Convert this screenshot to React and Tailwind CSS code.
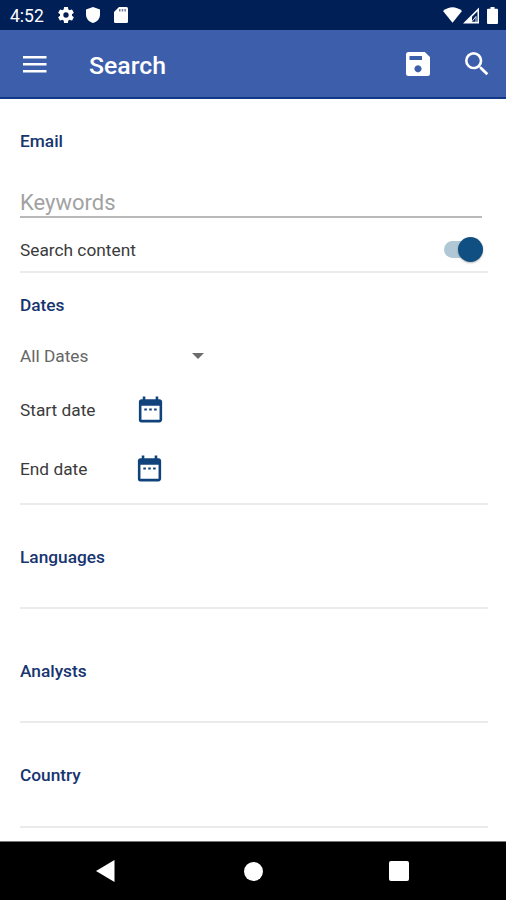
const Heading = ({ children, className }) => (
  <h2 className={`flex shrink-0 items-center text-[17.3px] font-medium text-[#17356f] ${className}`}>{children}</h2>
);

const Divider = ({ className = "" }) => <div className={`h-[2px] w-[468px] shrink-0 bg-[#ebebed] ${className}`} />;

const Calendar = ({ className = "" }) => (
  <svg viewBox="0 0 24 24" className={`mb-[2px] size-[31px] fill-[#10437c] ${className}`}>
    <path d="M19 4h-1V2h-2v2H8V2H6v2H5c-1.11 0-1.99.9-1.99 2L3 20a2 2 0 0 0 2 2h14c1.1 0 2-.9 2-2V6c0-1.1-.9-2-2-2zm0 16H5V9h14v11zM7.2 11.2h2v1.6h-2zM11 11.2h2v1.6h-2zM14.8 11.2h2v1.6h-2z" />
  </svg>
);

function StatusBar() {
  return (
    <div className="flex h-[30px] shrink-0 items-center bg-[#001f56] pl-[10px] text-white">
      <span className="w-[46px] pt-[3px] text-[17.5px] leading-none">4:52</span>
      <svg viewBox="0 0 24 24" className="size-[20px] fill-white">
        <path d="M19.14 12.94c.04-.3.06-.61.06-.94s-.02-.64-.07-.94l2.03-1.58a.49.49 0 0 0 .12-.61l-1.92-3.32a.49.49 0 0 0-.59-.22l-2.39.96c-.5-.38-1.03-.7-1.62-.94l-.36-2.54a.48.48 0 0 0-.48-.41h-3.84c-.24 0-.43.17-.47.41l-.36 2.54c-.59.24-1.13.57-1.62.94l-2.39-.96a.48.48 0 0 0-.59.22L2.74 8.87a.48.48 0 0 0 .12.61l2.03 1.58c-.05.3-.09.63-.09.94s.02.64.07.94l-2.03 1.58a.49.49 0 0 0-.12.61l1.92 3.32c.12.22.37.29.59.22l2.39-.96c.5.38 1.03.7 1.62.94l.36 2.54c.05.24.24.41.48.41h3.84c.24 0 .44-.17.47-.41l.36-2.54c.59-.24 1.13-.56 1.62-.94l2.39.96c.22.08.47 0 .59-.22l1.92-3.32a.48.48 0 0 0-.12-.61zM12 15.2A3.2 3.2 0 1 1 12 8.8a3.2 3.2 0 0 1 0 6.4z" />
      </svg>
      <svg viewBox="0 0 14 16" className="ml-[10px] h-[16px] w-[14px] fill-white">
        <path d="M7 0 14 2.6V7.5C14 11.5 11 15 7 16 3 15 0 11.5 0 7.5V2.6z" />
      </svg>
      <svg viewBox="0 0 14 16" className="ml-[14px] h-[16px] w-[14px]">
        <path className="fill-white" d="M5 0H12.5Q14 0 14 1.5V14.5Q14 16 12.5 16H1.5Q0 16 0 14.5V5z" />
        <path className="fill-[#6d7d9c]" d="M5 2h1.5v2.5H5zM7.7 2h1.5v2.5H7.7zM10.4 2h1.5v2.5h-1.5z" />
      </svg>
      <svg viewBox="0 0 19 16" className="ml-[315px] h-[16px] w-[19px] fill-white">
        <path d="M0 4Q9.5-3.5 19 4L9.5 15.7z" />
      </svg>
      <svg viewBox="0 0 17 17" className="ml-px h-[17px] w-[17px]">
        <path className="fill-white" fillRule="evenodd" d="M16 .5V16.5H0zM14.5 4.3 9 9.8V14.8h5.5z" />
        <path className="fill-none stroke-white stroke-[0.9]" d="M9 14.5 13 9.5V15" />
      </svg>
      <svg viewBox="0 0 11 17" className="ml-[7px] h-[17px] w-[11px] fill-white">
        <path d="M3.5 0h4v1.7H10Q11 1.7 11 2.7V16Q11 17 10 17H1Q0 17 0 16V2.7Q0 1.7 1 1.7h2.5z" />
      </svg>
    </div>
  );
}

function Toolbar() {
  return (
    <header className="flex h-[69px] shrink-0 items-center border-b-2 border-[#133787] bg-[#3c5eab] pl-[23px] text-white">
      <svg viewBox="0 0 24 18" className="h-[18px] w-[24px] fill-white">
        <path d="M0 .9h23.5v2.6H0zM0 7.9h23.5v2.6H0zM0 14.9h23.5v2.6H0z" />
      </svg>
      <h1 className="ml-[42px] mt-[6px] w-[317px] text-[24.8px] font-medium leading-none">Search</h1>
      <svg viewBox="0 0 24 24" className="size-[24px]">
        <path className="fill-white" fillRule="evenodd" d="M2.5 0H18.8L24 5V21.5Q24 24 21.5 24H2.5Q0 24 0 21.5V2.5Q0 0 2.5 0zM3.5 4V8H16V4zM12 13.2a3.6 3.6 0 1 0 .01 0z" />
      </svg>
      <svg viewBox="0 0 24 24" className="ml-[31px] size-[32px] fill-white">
        <path d="M15.5 14h-.79l-.28-.27A6.47 6.47 0 0 0 16 9.5 6.5 6.5 0 1 0 9.5 16c1.61 0 3.09-.59 4.23-1.57l.27.28v.79l5 4.99L20.49 19l-4.99-5zm-6 0C7.01 14 5 11.99 5 9.5S7.01 5 9.5 5 14 7.01 14 9.5 11.99 14 9.5 14z" />
      </svg>
    </header>
  );
}

export default function App() {
  return (
    <div className="flex h-[900px] w-[506px] flex-col overflow-hidden bg-white font-[Roboto,sans-serif]">
      <StatusBar />
      <Toolbar />
      <main className="flex h-[742px] shrink-0 flex-col pl-[20px] text-[17.3px] text-[#3b3b3b]">
        <Heading className="h-[84px] pt-[2px]">Email</Heading>
        <div className="flex h-[35px] w-[462px] shrink-0 items-center border-b-2 border-[#b9b9b9] pt-[5px] text-[22px] text-[#a2a2a2]">Keywords</div>
        <div className="flex h-[53px] w-[463px] shrink-0 items-center justify-between pt-[9px]">
          <span className="pt-[3px]">Search content</span>
          <span className="flex h-[17px] w-[39px] items-center justify-end rounded-full bg-[#b0c8d6]">
            <span className="size-[25px] shrink-0 rounded-full bg-[#0f4f82] shadow-[0_1px_2px_rgba(0,0,0,0.3)]" />
          </span>
        </div>
        <Divider />
        <Heading className="h-[64px] pt-[2px]">Dates</Heading>
        <div className="flex h-[38px] shrink-0 items-center text-[#666]">
          <span className="w-[172px] pt-[2px]">All Dates</span>
          <svg viewBox="0 0 12 6" className="h-[6px] w-[12px] fill-[#6c6c6c]"><path d="M0 0h12L6 6z" /></svg>
        </div>
        <div className="mt-[5px] flex h-[60px] shrink-0 items-center">
          <span className="w-[114px] pt-[2px]">Start date</span>
          <Calendar className="ml-px" />
        </div>
        <div className="flex h-[58px] shrink-0 items-center">
          <span className="w-[114px] pt-[2px]">End date</span>
          <Calendar />
        </div>
        <Divider className="mt-[5px]" />
        <Heading className="h-[102px] pt-[3px]">Languages</Heading>
        <Divider />
        <Heading className="h-[112px] pt-[13px]">Analysts</Heading>
        <Divider />
        <Heading className="h-[103px] pt-[3px]">Country</Heading>
        <Divider />
      </main>
      <nav className="flex h-[59px] shrink-0 items-center border-t border-[#777] bg-black pl-[96px]">
        <svg viewBox="0 0 19 22" className="h-[22px] w-[19px] fill-white"><path d="M18.5 0V22L0 11z" /></svg>
        <div className="ml-[129px] size-[19px] rounded-full bg-white" />
        <div className="ml-[126px] size-[20px] rounded-[2px] bg-white" />
      </nav>
    </div>
  );
}
